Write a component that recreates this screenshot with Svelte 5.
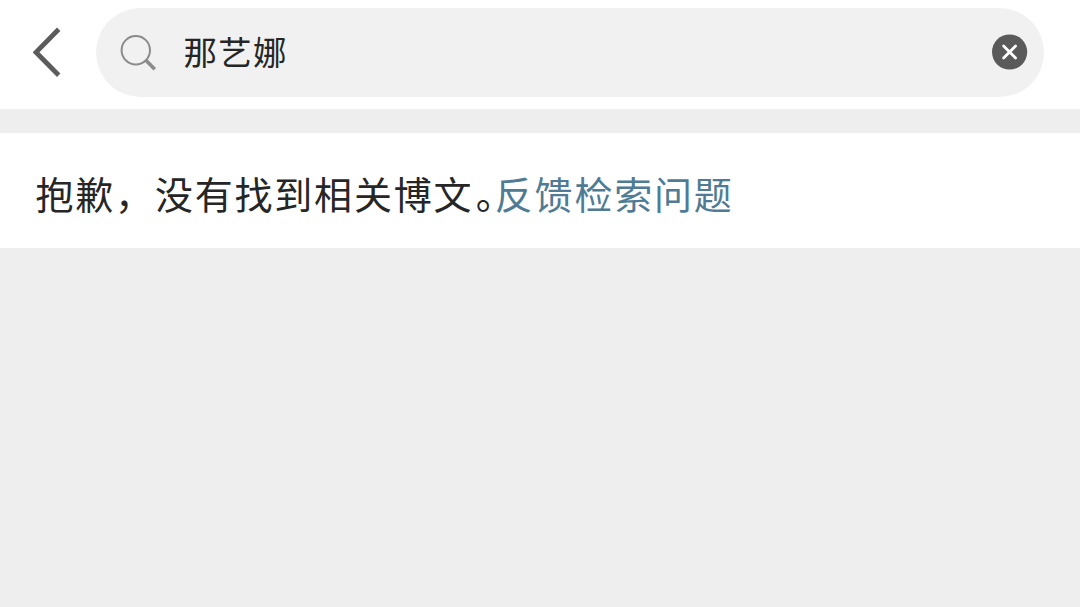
<script>
    let query = '那艺娜';
    let message = '抱歉，没有找到相关博文';

    const clearQuery = () => {
        query = '';
    };
</script>

<div class="page">
    <header class="search-bar">
        <button class="back" aria-label="返回">
            <svg width="28" height="50" viewBox="0 0 28 50" fill="none">
                <path d="M25.7 2.3L3 25.3L25.7 48.3" stroke="#5c5c5c" stroke-width="4.8" />
            </svg>
        </button>
        <div class="search-box">
            <svg class="search-icon" width="38" height="38" viewBox="0 0 38 38" fill="none">
                <circle cx="15.8" cy="17.2" r="14.2" stroke="#8b8b8b" stroke-width="2" />
                <path d="M25.6 27L34.8 36.3" stroke="#8b8b8b" stroke-width="3.6" />
            </svg>
            <span class="query">{query}</span>
            <button class="clear" aria-label="清除" on:click={clearQuery}>
                <svg width="36" height="36" viewBox="0 0 36 36" fill="none">
                    <circle cx="17.6" cy="18" r="17.6" fill="#5a5a5a" />
                    <path d="M11.6 12L23.6 24M23.6 12L11.6 24" stroke="#fff" stroke-width="2.8" stroke-linecap="round" />
                </svg>
            </button>
        </div>
    </header>

    <div class="result">
        <span>{message}</span><span class="stop">。</span><span class="feedback">反馈检索问题</span>
    </div>
</div>

<style>
    :global(body) {
        margin: 0;
        background: #eeeeee;
    }

    .page {
        min-height: 607px;
        background: #eeeeee;
        font-family: "Noto Sans CJK SC", sans-serif;
        color: #262626;
    }

    .search-bar {
        display: flex;
        align-items: center;
        box-sizing: border-box;
        height: 109px;
        padding: 0 36px 4px 33px;
        background: #fff;
    }

    button {
        display: flex;
        padding: 0;
        border: none;
        background: none;
        cursor: pointer;
    }

    .back {
        margin-bottom: 1px;
    }

    .search-box {
        display: flex;
        align-items: center;
        flex: 1;
        box-sizing: border-box;
        height: 89px;
        margin-left: 35px;
        padding: 0 16px 2px 24px;
        border-radius: 45px;
        background: #f1f1f1;
    }

    .query {
        flex: 1;
        margin-left: 25.6px;
        padding-bottom: 2px;
        font-size: 33.5px;
        line-height: 48px;
        letter-spacing: 1.2px;
        white-space: nowrap;
    }

    .result {
        display: flex;
        align-items: center;
        box-sizing: border-box;
        height: 115px;
        margin-top: 24px;
        padding: 3px 34px 0 35.5px;
        background: #fff;
        font-size: 38px;
        letter-spacing: 1.8px;
        white-space: nowrap;
    }

    /* half-width full stop, so the link follows it closely */
    .stop {
        width: 19px;
        margin-left: 2.5px;
        letter-spacing: 0;
        font-feature-settings: "halt";
    }

    .feedback {
        color: #4f7b94;
    }
</style>
